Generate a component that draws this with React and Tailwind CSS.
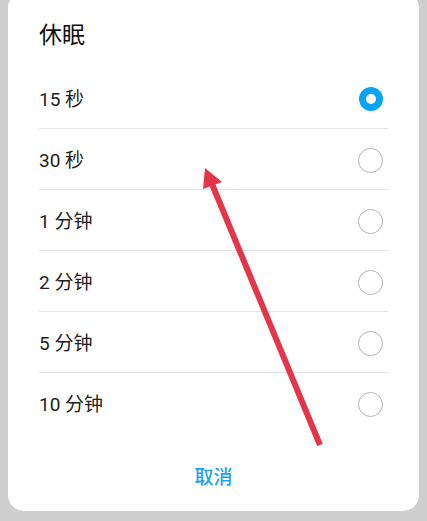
import React, { useState } from 'react';

const options = ['15 秒', '30 秒', '1 分钟', '2 分钟', '5 分钟', '10 分钟'];

const Radio = ({ checked }) => (
  checked ? (
    <span className="block w-6 h-6 rounded-full border-[7px] border-[#0ba4f4] bg-white" />
  ) : (
    <span className="block w-[25px] h-[25px] rounded-full border-[1.5px] border-[#b5b5b5] bg-white" />
  )
);

const App = () => {
  const [selected, setSelected] = useState(0);

  return (
    <div
      className="relative w-[427px] h-[521px] overflow-hidden bg-[#cfcfcf] px-2"
      style={{ fontFamily: "Roboto, 'Noto Sans CJK SC', sans-serif" }}
    >
      <div className="-mt-2 bg-white rounded-2xl pt-7 pb-[9px]">
        <h2 className="px-[31px] h-7 leading-7 pt-[2px] text-[23px] font-normal text-[#111]">休眠</h2>
        <ul className="mt-5 px-[31px]">
          {options.map((label, i) => (
            <li
              key={label}
              onClick={() => setSelected(i)}
              className={`flex items-center justify-between h-[61px] pr-[5px] ${i < options.length - 1 ? 'border-b border-[#e3e3e3]' : ''}`}
            >
              <span className="pt-1 text-[19px] text-[#222]">{label}</span>
              <span className="pt-[2px] w-[25px] flex justify-center">
                <Radio checked={selected === i} />
              </span>
            </li>
          ))}
        </ul>
        <button className="mt-5 h-12 w-full text-[19px] font-medium text-[#1ea1ee]">取消</button>
      </div>

      {/* red arrow annotation */}
      <svg className="absolute inset-0 pointer-events-none" width="427" height="521" viewBox="0 0 427 521">
        <line x1="320" y1="445" x2="212" y2="184" stroke="#e3364b" strokeWidth="6" />
        <polygon points="205,168 222,182 203,189" fill="#e3364b" />
      </svg>
    </div>
  );
};

export default App;
